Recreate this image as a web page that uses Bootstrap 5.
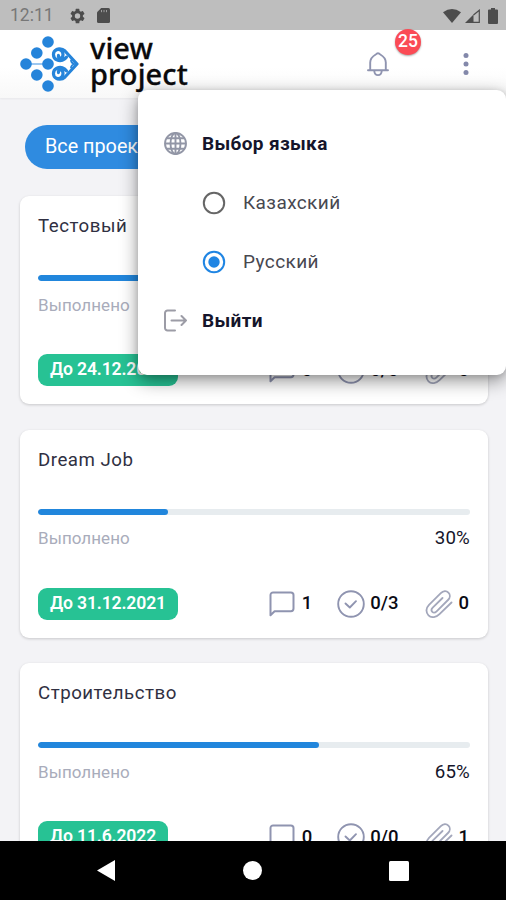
<!DOCTYPE html>
<html lang="ru">
<head>
<meta charset="utf-8">
<meta name="viewport" content="width=device-width, initial-scale=1">
<title>View Project</title>
<link href="https://cdn.jsdelivr.net/npm/bootstrap@5.3.0/dist/css/bootstrap.min.css" rel="stylesheet">
<style>
body{font-family:Roboto,"Noto Sans",sans-serif;background:#f3f3f6;color:#15152b;height:900px;overflow:hidden;line-height:1}
svg{display:block;flex:none}
.line{fill:none;stroke:#8f94b0;stroke-linecap:round;stroke-linejoin:round}
.status{height:30px;background:#bebebe;color:#777;font-size:17.5px;padding:1px 8px 0 10px}
.topbar{height:68px;background:linear-gradient(#fff 55%,#f8f8f8);padding:0 37px 0 20px;box-shadow:0 1px 2px rgba(0,0,0,.05)}
.brand-text{font:500 29px/26px "Noto Sans",sans-serif;letter-spacing:.1px;-webkit-text-stroke:.3px #0a0a0c;color:#0a0a0c;margin:-7px 0 0 11px}
.bell-count{position:absolute;left:28px;top:-22px;width:26px;height:26px;background:#fb4b55;color:#fff;font-size:17.5px;font-weight:500;box-shadow:0 1px 2px rgba(0,0,0,.35)}
.dots{margin-left:74px}
.content-area{padding:27px 18px 0 20px}
.chip{height:44px;width:170px;margin:0 0 27px 5px;padding-left:20px;background:#2f8be0;color:#fff;font-size:19.8px;white-space:nowrap}
.project{height:208px;margin-bottom:25.6px;border:0;border-radius:9px;padding:0 18px;box-shadow:0 1px 3px rgba(0,0,0,.18)}
.project-title{font-size:18.7px;letter-spacing:.5px;color:#303042;height:22px;line-height:22px;margin-top:19px}
.progress.thin{height:6px;margin-top:38px;background:#e7ecef;border-radius:3px}
.thin .progress-bar{background:#2186dc;border-radius:3px}
.done-row{height:24px;margin-top:12px}
.done-label{font-size:17px;color:#a9acbb;letter-spacing:.05px}
.percent{font-size:18.7px;letter-spacing:.2px}
.foot{height:32px;margin-top:37px}
.due{height:32px;padding:0 12px;border-radius:9px;background:#27c294;color:#fff;font-size:17.6px;letter-spacing:-.15px;font-weight:600;white-space:nowrap}
.stat{font-size:18.5px;font-weight:500;color:#0a0a14;padding-right:1px}
.msg{margin-right:7px}
.chk{margin:0 5px 0 25px}
.att{margin:0 5px 0 27px}
.lang-menu{position:absolute;left:138px;top:90px;width:368px;height:285px;background:#fff;border-radius:9px;box-shadow:0 6px 18px rgba(0,0,0,.42),0 1px 6px rgba(0,0,0,.12);padding:24px 26px;z-index:5}
.menu-row{height:59px;font-size:19px}
.menu-row strong{font-weight:700;margin-left:15px;letter-spacing:.35px}
.menu-row.option{padding-left:38px}
.menu-row.option span{margin-left:17px;letter-spacing:.4px;color:#484850}
.android{height:59px;background:#000;position:absolute;left:0;right:0;bottom:0;z-index:4;padding:0 97px}
</style>
<script src="https://cdn.jsdelivr.net/npm/bootstrap@5.3.0/dist/js/bootstrap.bundle.min.js"></script>
</head>
<body>
<svg width="0" height="0" class="position-absolute">
  <symbol id="comment" viewBox="0 0 26 26"><path class="line" stroke-width="2" d="M1.500 24.300V4a2.600 2.600 0 0 1 2.600-2.600h17.800A2.600 2.600 0 0 1 24.500 4v13.600a2.600 2.600 0 0 1-2.600 2.600H5.600z"/></symbol>
  <symbol id="check" viewBox="0 0 28 28"><circle class="line" stroke-width="1.900" cx="14" cy="14" r="12.800"/><path class="line" stroke-width="1.900" d="M8.500 13.500l4.300 4 6.200-6.300"/></symbol>
  <symbol id="clip" viewBox="0 0 28 28"><path class="line" style="stroke:#a3a7bb" stroke-width="1.800" d="M26.500 12.500L14.500 24.200C11.300 27.500 6.500 28.200 3.500 25.300S1 17.800 4 14.800L15.800 3.200c2.400-2.400 5.600-2.600 7.600-.6s1.900 5.100-.4 7.400L11.600 21.300c-1.500 1.500-3.200 1.600-4.300.5s-1-2.800.4-4.200L17.500 8"/></symbol>
</svg>

<div class="status d-flex align-items-center">
  <span>12:11</span>
  <svg class="ms-3" width="15" height="16" viewBox="2 2 20 20" fill="#4d4d4d"><path d="M19.140 12.940c.04-.3.060-.61.060-.94s-.02-.64-.07-.94l2.030-1.580a.49.49 0 0 0 .12-.61l-1.920-3.320a.49.49 0 0 0-.59-.22l-2.390.96a7 7 0 0 0-1.620-.94l-.36-2.540a.48.48 0 0 0-.48-.41h-3.840a.47.47 0 0 0-.47.41l-.36 2.540c-.59.240-1.130.570-1.620.940l-2.390-.960a.48.48 0 0 0-.59.220L2.740 8.870a.48.48 0 0 0 .12.610l2.030 1.580a6 6 0 0 0 0 1.880l-2.030 1.580a.49.49 0 0 0-.12.610l1.920 3.320c.12.220.370.290.590.220l2.390-.96c.5.380 1.030.7 1.620.940l.36 2.540c.050.240.240.410.480.410h3.840c.240 0 .440-.17.470-.41l.36-2.540a7 7 0 0 0 1.620-.94l2.390.96c.220.080.470 0 .590-.22l1.920-3.320a.47.47 0 0 0-.12-.61zM12 15.600a3.600 3.600 0 1 1 0-7.200 3.600 3.600 0 0 1 0 7.200z"/></svg>
  <svg class="ms-2 ps-1" width="17" height="15" viewBox="0 0 13 15"><path fill="#4d4d4d" d="M4.200 0H11.500A1.500 1.500 0 0 1 13 1.500v12a1.500 1.500 0 0 1-1.500 1.500h-10A1.500 1.500 0 0 1 0 13.500V4.200z"/><path stroke="#bebebe" stroke-width=".7" d="M4.500 2v2.200M7 2v2.200M9.500 2v2.200"/></svg>
  <div class="d-flex align-items-center ms-auto">
    <svg width="18" height="14" viewBox="0 0 18 14"><path fill="#4d4d4d" d="M9 14L0 3.200Q9-3 18 3.200z"/></svg>
    <svg class="ms-1" width="15" height="14" viewBox="0 0 15 14"><path fill="#4d4d4d" d="M0 14L8.500 5.500V14z"/><path fill="none" stroke="#4d4d4d" stroke-width="1.200" d="M8.500 6l5.800-4.800v12.200H8"/></svg>
    <svg class="ms-2" width="10" height="16" viewBox="0 0 10 16"><path fill="#4d4d4d" d="M3 0h4v1.600h2a1 1 0 0 1 1 1V15a1 1 0 0 1-1 1H1a1 1 0 0 1-1-1V2.600a1 1 0 0 1 1-1h2z"/></svg>
  </div>
</div>

<header class="topbar d-flex align-items-center">
  <svg width="59" height="56" viewBox="0 0 59 56">
    <path d="M10 28h14" stroke="#9cc7f0" stroke-width="2"/>
    <g fill="#2584da"><circle cx="28" cy="6" r="5.800"/><circle cx="16.800" cy="17" r="5.800"/><circle cx="6" cy="28" r="5.800"/><circle cx="28" cy="28" r="5.800"/><circle cx="16.800" cy="39" r="5.800"/><circle cx="28" cy="50" r="5.800"/></g>
    <g fill="none" stroke="#2584da" stroke-width="3.200" stroke-linecap="round" stroke-linejoin="round">
      <path d="M38.500 19.500c-1 3.800 4.500 3.500 4.500-1 0-4.200-3.800-5.800-6.500-4.700-4.200 1.600-4 8 .2 10 4 1.700 8 .2 9.800-2.600"/>
      <path d="M38.500 36.500c-1-3.800 4.500-3.500 4.500 1 0 4.200-3.800 5.800-6.500 4.700-4.200-1.600-4-8 .2-10 4-1.700 8-.2 9.800 2.600"/>
      <path d="M37 13.200c3-.8 6-.2 8 1.800L57 28 45 41c-2 2-5 2.600-8 1.800"/>
      <path stroke-width="1.800" d="M51 24.500c.3 1.800 1.500 3 3.500 3.500-2 .5-3.200 1.700-3.500 3.500"/>
    </g>
  </svg>
  <div class="brand-text"><div>view</div><div>project</div></div>
  <div class="position-relative ms-auto">
    <svg width="22" height="26" viewBox="0 0 22 26"><g class="line" stroke-width="1.900"><path d="M1 19.300h20M3.200 19V11.500C3.200 6.500 7 4.500 9 3.300a2.400 2.400 0 0 1 4 0c2 1.200 5.800 3.200 5.800 8.200V19"/><path d="M7.300 20c.4 5.500 7 5.500 7.400 0"/></g></svg>
    <span class="bell-count rounded-circle d-flex align-items-center justify-content-center">25</span>
  </div>
  <svg class="dots" width="6" height="24" viewBox="0 0 6 24" fill="#8388aa"><circle cx="3" cy="3.500" r="2.500"/><circle cx="3" cy="12" r="2.500"/><circle cx="3" cy="20.500" r="2.500"/></svg>
</header>

<main class="content-area">
  <div class="chip rounded-pill d-flex align-items-center">Все проекты</div>
  <article class="card project">
    <div class="project-title">Тестовый</div>
    <div class="progress thin"><div class="progress-bar" style="width:40%"></div></div>
    <div class="done-row d-flex align-items-center justify-content-between"><span class="done-label">Выполнено</span></div>
    <div class="foot d-flex align-items-center"><span class="due d-flex align-items-center">До 24.12.2021</span>
      <div class="stat d-flex align-items-center ms-auto"><svg class="msg" width="26" height="26"><use href="#comment"/></svg>0<svg class="chk" width="28" height="28"><use href="#check"/></svg>0/0<svg class="att" width="28" height="28"><use href="#clip"/></svg>0</div></div>
  </article>
  <article class="card project">
    <div class="project-title">Dream Job</div>
    <div class="progress thin"><div class="progress-bar" style="width:30%"></div></div>
    <div class="done-row d-flex align-items-center justify-content-between"><span class="done-label">Выполнено</span><span class="percent">30%</span></div>
    <div class="foot d-flex align-items-center"><span class="due d-flex align-items-center">До 31.12.2021</span>
      <div class="stat d-flex align-items-center ms-auto"><svg class="msg" width="26" height="26"><use href="#comment"/></svg>1<svg class="chk" width="28" height="28"><use href="#check"/></svg>0/3<svg class="att" width="28" height="28"><use href="#clip"/></svg>0</div></div>
  </article>
  <article class="card project">
    <div class="project-title">Строительство</div>
    <div class="progress thin"><div class="progress-bar" style="width:65%"></div></div>
    <div class="done-row d-flex align-items-center justify-content-between"><span class="done-label">Выполнено</span><span class="percent">65%</span></div>
    <div class="foot d-flex align-items-center"><span class="due d-flex align-items-center">До 11.6.2022</span>
      <div class="stat d-flex align-items-center ms-auto"><svg class="msg" width="26" height="26"><use href="#comment"/></svg>0<svg class="chk" width="28" height="28"><use href="#check"/></svg>0/0<svg class="att" width="28" height="28"><use href="#clip"/></svg>1</div></div>
  </article>
</main>

<div class="lang-menu">
  <div class="menu-row d-flex align-items-center">
    <svg width="23" height="23" viewBox="0 0 23 23" fill="none" stroke="#9296a6" stroke-width="1.900"><circle cx="11.500" cy="11.500" r="10.500"/><ellipse cx="11.500" cy="11.500" rx="5" ry="10.500"/><path d="M11.500 1v21M1 11.500h21M2.700 6.200h17.600M2.700 16.800h17.600"/></svg>
    <strong>Выбор языка</strong>
  </div>
  <div class="menu-row option d-flex align-items-center">
    <svg width="24" height="24" viewBox="0 0 24 24"><circle cx="12" cy="12" r="10.200" fill="none" stroke="#666" stroke-width="2"/></svg>
    <span>Казахский</span>
  </div>
  <div class="menu-row option d-flex align-items-center">
    <svg width="24" height="24" viewBox="0 0 24 24"><circle cx="12" cy="12" r="10.200" fill="none" stroke="#1f85e3" stroke-width="2"/><circle cx="12" cy="12" r="5.700" fill="#1f85e3"/></svg>
    <span>Русский</span>
  </div>
  <div class="menu-row d-flex align-items-center">
    <svg width="23" height="23" viewBox="0 0 23 23" fill="none" stroke="#9c9ca6" stroke-width="2" stroke-linecap="round" stroke-linejoin="round"><path d="M11 1.500H3.500A2.500 2.500 0 0 0 1 4v15a2.500 2.500 0 0 0 2.500 2.500H11M7.500 11.500H22M17.500 7l4.500 4.500-4.500 4.500"/></svg>
    <strong>Выйти</strong>
  </div>
</div>

<nav class="android d-flex align-items-center justify-content-between">
  <svg width="18" height="21" viewBox="0 0 18 21"><path fill="#fff" d="M18 0v21L0 10.500z"/></svg>
  <svg width="19" height="19"><circle cx="9.500" cy="9.500" r="9.500" fill="#fff"/></svg>
  <svg width="20" height="20"><rect width="20" height="20" rx="1.500" fill="#fff"/></svg>
</nav>
</body>
</html>
